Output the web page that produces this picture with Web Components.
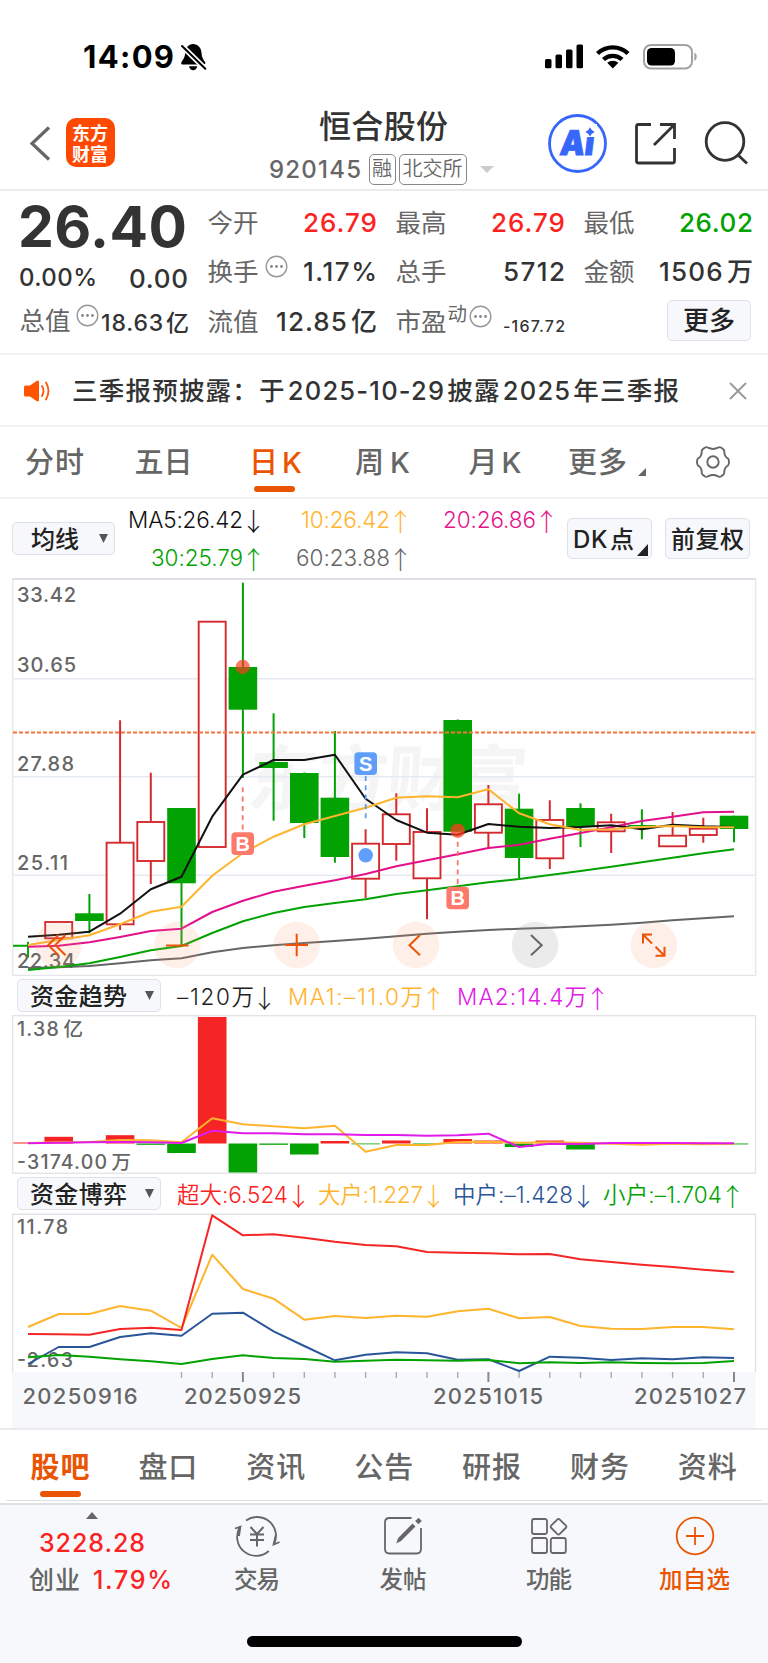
<!DOCTYPE html>
<html lang="zh-CN">
<head>
<meta charset="UTF-8">
<meta name="viewport" content="width=device-width, initial-scale=1.0">
<title>恒合股份 920145</title>
<style>
  body {
    margin: 0;
    width: 768px;
    height: 1663px;
    overflow: hidden;
    background: #fff;
    color: #333;
    font-family: Inter, "Noto Sans CJK SC", sans-serif;
    --orange: #ea5504;
    --red: #fc2222;
    --green: #02a202;
    --gray: #666;
    --line: #ebebee;
    --panel: #f7f8fb;
  }
</style>
</head>
<body>
<status-bar></status-bar>
<stock-header name="恒合股份" code="920145"></stock-header>
<quote-panel></quote-panel>
<notice-bar><fit-text w="607">三季报预披露：于 2025-10-29 披露 2025 年三季报</fit-text></notice-bar>
<period-tabs></period-tabs>
<ma-legend></ma-legend>
<kline-chart></kline-chart>
<indicator-row label="资金趋势" gap="18">
  <trend-value w="77" dir="↓" style="color:#222">–120万</trend-value>
  <trend-value w="135" dir="↑" style="color:#ffb42e">MA1:–11.0万</trend-value>
  <trend-value w="130" dir="↑" style="color:#e01ae8">MA2:14.4万</trend-value>
</indicator-row>
<flow-chart></flow-chart>
<indicator-row label="资金博弈" gap="14">
  <trend-value w="111" dir="↓" style="color:#fc2222">超大:6.524</trend-value>
  <trend-value w="105" dir="↓" style="color:#ffb42e">大户:1.227</trend-value>
  <trend-value w="120" dir="↓" style="color:#2a5699">中户:–1.428</trend-value>
  <trend-value w="119" dir="↑" style="color:#02a202">小户:–1.704</trend-value>
</indicator-row>
<game-chart></game-chart>
<info-tabs></info-tabs>
<bottom-nav></bottom-nav>

<script>
const STEP = 30.695;
const X0 = 28;
const px = i => +(X0 + i * STEP).toFixed(1);

// polyline through the 24 trading days; values are in thirds of a pixel below base
function line(values, base, color, width = 2) {
  const pts = values.map((v, i) => px(i) + ',' + (base + v / 3).toFixed(1)).join(' ');
  return `<polyline points="${pts}" fill="none" stroke="${color}" stroke-width="${width}" stroke-linejoin="round"/>`;
}

function label(x, y, w, text, size = 20) {
  return `<text x="${x}" y="${y}" font-size="${size}" font-weight="500" fill="#666" textLength="${w}" style="word-spacing:-3px">${text}</text>`;
}

class TrendValue extends HTMLElement {
  connectedCallback() {
    this.attachShadow({ mode: 'open' });
    const text = this.textContent.trim();
    this.shadowRoot.innerHTML = `
      <style>
        :host { display: flex; align-items: center; font-size: 22.5px; line-height: 32px; font-weight: 350; }
        i { width: 11px; margin-left: 5px; display: flex; justify-content: center; font: 300 25px/32px "Noto Sans CJK SC"; }
      </style>
      <fit-text w="${this.getAttribute('w')}">${text}</fit-text><i>${this.getAttribute('dir')}</i>
    `;
  }
}
customElements.define('trend-value', TrendValue);

class StatusBar extends HTMLElement {
  connectedCallback() {
    this.attachShadow({ mode: 'open' });
    this.shadowRoot.innerHTML = `
      <style>
        :host { display: flex; align-items: center; height: 100px; box-sizing: border-box; padding: 14px 71px 0 83px; color: #000; }
        .time { font-size: 31px; line-height: 40px; font-weight: 700; }
        .bell { margin-left: 6px; }
        .right { margin-left: auto; }
        svg { display: block; }
      </style>
      <fit-text class="time" w="91">14:09</fit-text>
      <svg class="bell" width="27" height="28" viewBox="180 43 27 28">
        <path d="M193 44c5 0 8 3.600 8.500 8.500.4 5 1.500 6.500 3.500 9.500.8 1.400.3 2.500-1.300 2.500H183c-1.800 0-2.300-1.200-1.400-2.600 2-3 3.300-4.600 3.600-9.400C185.700 47.600 188.500 44 193 44zM189 66.300h8.300c-.6 2.500-2.200 3.900-4.100 3.900s-3.600-1.400-4.200-3.900z"/>
        <path d="M180.500 44.500l25.500 25" stroke="#fff" stroke-width="5.500"/>
        <path d="M182 46l23.300 22.800" stroke="#000" stroke-width="2" stroke-linecap="round"/>
      </svg>
      <svg class="right" width="154" height="28" viewBox="543 43 154 28">
        <rect x="545" y="59" width="6.500" height="9.300" rx="1.500"/>
        <rect x="555.500" y="54.500" width="6.500" height="13.800" rx="1.500"/>
        <rect x="566" y="49.500" width="6.500" height="18.800" rx="1.500"/>
        <rect x="576.500" y="44.500" width="6.500" height="23.800" rx="1.500"/>
        <path d="M597.500 53.500a22 22 0 0 1 30.500 0M603.500 59.500a13.500 13.500 0 0 1 18.500 0" fill="none" stroke="#000" stroke-width="4.400"/>
        <path d="M612.800 68.500l-5.600-5.700a8.300 8.300 0 0 1 11.200 0z"/>
        <rect x="644" y="45" width="48" height="23.500" rx="7" fill="none" stroke="#a2a2a2" stroke-width="2"/>
        <rect x="647" y="48" width="28" height="17.500" rx="4.500"/>
        <path d="M694.300 52.500c3.200 1.300 3.200 7 0 8.300z" fill="#a2a2a2"/>
      </svg>
    `;
  }
}
customElements.define('status-bar', StatusBar);

class StockHeader extends HTMLElement {
  connectedCallback() {
    this.attachShadow({ mode: 'open' });
    this.shadowRoot.innerHTML = `
      <style>
        :host { display: grid; grid-template-columns: 269px 1fr 221px; height: 91px; box-sizing: border-box; border-bottom: 2px solid var(--line); }
        svg { display: block; }
        .left { display: flex; align-items: flex-start; padding: 18px 0 0 28px; }
        .left svg { margin: 6px 11.500px 0 0; }
        .logo { width: 49px; height: 49px; box-sizing: border-box; border-radius: 10px; background: #ff4800; color: #fff; font: 700 18px/21px "Noto Sans CJK SC"; text-align: center; padding-top: 4px; }
        .name { font-size: 32px; line-height: 40px; font-weight: 500; padding: 7px 0 0 50px; height: 40px; }
        .sub { display: flex; align-items: center; height: 31px; margin-top: 7px; color: var(--gray); }
        .code { font-size: 24px; line-height: 31px; font-weight: 500; }
        .tag { box-sizing: border-box; height: 31px; border: 1.5px solid #888; border-radius: 5px; font-size: 20px; line-height: 29px; margin-left: 3px; text-align: center; font-weight: 350; }
        .first { margin-left: 7.500px; }
        .arrow { border: 7px solid transparent; border-top-color: #ccc; border-bottom: 0; margin-left: 13px; }
        .right { display: flex; padding-top: 13px; }
      </style>
      <div class="left">
        <svg width="26" height="38" viewBox="28 124 26 38"><path d="M49 127.500L32 143.500l17 16" fill="none" stroke="#666" stroke-width="3.200"/></svg>
        <div class="logo">东方<br>财富</div>
      </div>
      <div class="mid">
        <div class="name"><fit-text w="129">${this.getAttribute('name')}</fit-text></div>
        <div class="sub">
          <fit-text class="code" w="92">${this.getAttribute('code')}</fit-text>
          <span class="tag first" style="width:27px">融</span>
          <span class="tag" style="width:68px">北交所</span>
          <span class="arrow"></span>
        </div>
      </div>
      <div class="right">
        <svg width="204" height="62" viewBox="547 113 204 62">
          <circle cx="577.500" cy="143.500" r="28" fill="#fff" stroke="#3766fa" stroke-width="2.800"/>
          <g transform="translate(559 154.500) skewX(-7)">
            <text font-family="Inter" font-size="34" font-weight="900" fill="#3766fa" stroke="#3766fa" textLength="34" lengthAdjust="spacingAndGlyphs">Ai</text>
          </g>
          <rect x="584" y="124" width="13" height="13" fill="#fff"/>
          <path d="M590 127.200q1.300 3.400 4.700 4.700-3.400 1.300-4.700 4.700-1.300-3.400-4.700-4.700 3.400-1.300 4.700-4.700z" fill="#3766fa"/>
          <g fill="none" stroke="#333" stroke-width="2.800">
            <path d="M651 124.500h-12.500q-2 0-2 2V161q0 2 2 2h34q2 0 2-2v-13M660 124.500h14.500V139M674.500 124.500L654 145"/>
            <circle cx="725" cy="141.500" r="18.800"/>
            <path d="M737.500 154.500l9.500 9"/>
          </g>
        </svg>
      </div>
    `;
  }
}
customElements.define('stock-header', StockHeader);

const dots = `<svg width="23" height="23" viewBox="-11.500 -11.500 23 23"><circle r="10.300" fill="none" stroke="#999" stroke-width="1.400"/><g fill="#888"><circle cx="-5" r="1.400"/><circle r="1.400"/><circle cx="5" r="1.400"/></g></svg>`;

class QuotePanel extends HTMLElement {
  connectedCallback() {
    this.attachShadow({ mode: 'open' });
    const cell = (name, w, value, cls = '', extra = '') => `
      <div class="cell"><span class="k">${name}</span>${extra}<span class="v ${cls}"><fit-text w="${w}">${value}</fit-text></span></div>`;
    this.shadowRoot.innerHTML = `
      <style>
        :host { display: grid; grid-template-columns: repeat(4, 168px); column-gap: 20px; padding: 7px 15px 0 20px; height: 164px; box-sizing: border-box; border-bottom: 2px solid #f2f2f4; word-spacing: -5px; }
        .col { display: flex; flex-direction: column; }
        .cell { display: flex; align-items: center; height: 49.300px; font-size: 26px; line-height: 49px; }
        .k { color: var(--gray); font-size: 25.500px; white-space: nowrap; margin-left: -0.500px; }
        .v { margin: 0 -1px 0 auto; font-weight: 500; white-space: nowrap; }
        .up { color: var(--red); }
        .down { color: var(--green); }
        svg { display: block; margin: -10px 0 0 6px; }
        .price { font-size: 57px; line-height: 57px; font-weight: 700; height: 57px; margin-left: -2px; }
        .change { display: flex; justify-content: space-between; font-size: 25px; height: 43px; line-height: 31px; font-weight: 500; margin: 7px 0 0 -1px; }
        .small { font-size: 23px; padding-top: 5px; }
        .tiny { font-size: 16px; padding-top: 11px; }
        sup { font-size: 19.500px; line-height: 20px; color: var(--gray); margin: -15px 0 0 1px; }
        sup + svg { margin-left: 2px; }
        button { margin: -2px 1px 0 auto; width: 84px; height: 41px; border: 1.500px solid #dfe1e6; border-radius: 5px; background: var(--panel); color: #222; font: 500 26px/37px Inter, "Noto Sans CJK SC"; padding: 0; }
      </style>
      <div class="col">
        <fit-text class="price" w="169">26.40</fit-text>
        <div class="change"><fit-text w="78" style="font-size:24px">0.00%</fit-text><fit-text w="59" style="font-size:26px;padding-top:1px">0.00</fit-text></div>
        <div class="cell" style="margin-top:-9px"><span class="k">总值</span><span style="margin-left:-1px">${dots}</span><span class="v small"><fit-text w="88">18.63 亿</fit-text></span></div>
      </div>
      <div class="col">
        ${cell('今开', 74, '26.79', 'up')}
        ${cell('换手', 74, '1.17%', '', `<span>${dots}</span>`)}
        ${cell('流值', 101, '12.85 亿')}
      </div>
      <div class="col">
        ${cell('最高', 74, '26.79', 'up')}
        ${cell('总手', 62, '5712')}
        ${cell('市盈', 62, '-167.72', 'tiny', `<sup>动</sup>${dots}`)}
      </div>
      <div class="col">
        ${cell('最低', 74, '26.02', 'down')}
        ${cell('金额', 94, '1506 万')}
        <div class="cell"><button>更多</button></div>
      </div>
    `;
  }
}
customElements.define('quote-panel', QuotePanel);

class NoticeBar extends HTMLElement {
  connectedCallback() {
    this.attachShadow({ mode: 'open' });
    this.shadowRoot.innerHTML = `
      <style>
        :host { display: flex; align-items: center; height: 72px; box-sizing: border-box; padding: 1px 21px 0 23px; border-bottom: 2px solid #f2f2f4; font-size: 25.500px; line-height: 40px; font-weight: 500; word-spacing: -6px; }
        .text { margin-left: 21px; white-space: nowrap; }
        .close { margin-left: auto; }
        svg { flex: none; }
      </style>
      <svg width="28" height="24" viewBox="22 378 28 24">
        <path d="M24.500 384.500h4.500l6.500-4.500q2.500-1.300 2.500 1.200v17.600q0 2.500-2.500 1.200L29 395.500h-4.500q-1.500 0-1.500-1.500v-8q0-1.500 1.500-1.500z" fill="#ff5500"/>
        <path d="M41 385q3 5 0 10M45 381.500q5 8.500 0 17" fill="none" stroke="#ff5500" stroke-width="1.800" stroke-linecap="round"/>
      </svg>
      <div class="text"><slot></slot></div>
      <svg class="close" width="18" height="18" viewBox="0 0 18 18"><path d="M1 1l16 16M17 1L1 17" stroke="#999" stroke-width="1.900"/></svg>
    `;
  }
}
customElements.define('notice-bar', NoticeBar);

class PeriodTabs extends HTMLElement {
  connectedCallback() {
    this.attachShadow({ mode: 'open' });
    this.shadowRoot.innerHTML = `
      <style>
        :host { display: grid; grid-template-columns: 109px 109px 115px 99px 126px 99px 111px; height: 72px; box-sizing: border-box; border-bottom: 2px solid #f2f2f4; color: var(--gray); font-size: 29px; font-weight: 500; line-height: 71px; word-spacing: -4px; }
        div { display: flex; justify-content: center; position: relative; height: 70px; }
        .active { color: var(--orange); }
        .active::after { content: ""; position: absolute; width: 41px; height: 6px; border-radius: 3px; background: var(--orange); bottom: 5px; left: 36px; }
        .more { justify-content: flex-start; padding-left: 10px; }
        .more svg { margin: 41px 0 0 11px; }
        .gear { align-items: center; }
      </style>
      <div><fit-text w="59">分时</fit-text></div>
      <div><fit-text w="58">五日</fit-text></div>
      <div class="active"><fit-text w="53">日 K</fit-text></div>
      <div><fit-text w="55">周 K</fit-text></div>
      <div><fit-text w="53">月 K</fit-text></div>
      <div class="more"><fit-text w="59">更多</fit-text><svg width="8" height="8"><path d="M8 0v8H0z" fill="#666"/></svg></div>
      <div class="gear">
        <svg width="36" height="34" viewBox="-18 -17 36 34" fill="none" stroke="#666" stroke-width="1.900" stroke-linejoin="round">
          <path d="M-8 -14.500Q-6.500 -15.300 -5 -14.300Q0 -11.800 5 -14.300Q6.500 -15.300 8 -14.500L10.500 -12.500Q11.500 -11.500 11.300 -10Q11.300 -5.500 15 -3.500Q16 -2.500 16 0Q16 2.500 15 3.500Q11.300 5.500 11.300 10Q11.500 11.500 10.500 12.500L8 14.500Q6.500 15.300 5 14.300Q0 11.800 -5 14.300Q-6.500 15.300 -8 14.500L-10.500 12.500Q-11.500 11.500 -11.300 10Q-11.300 5.500 -15 3.500Q-16 2.500 -16 0Q-16 -2.500 -15 -3.500Q-11.300 -5.500 -11.300 -10Q-11.500 -11.500 -10.500 -12.500Z"/>
          <circle r="5.700"/>
        </svg>
      </div>
    `;
  }
}
customElements.define('period-tabs', PeriodTabs);

class MaLegend extends HTMLElement {
  connectedCallback() {
    this.attachShadow({ mode: 'open' });
    this.shadowRoot.innerHTML = `
      <style>
        :host { display: flex; height: 79px; align-items: flex-start; padding-left: 12px; }
        .btn { box-sizing: border-box; display: flex; border: 1.500px solid #dfe1e8; border-radius: 5px; background: var(--panel); color: #222; font-size: 24px; font-weight: 500; flex: none; word-spacing: -5px; }
        .avg { width: 103px; height: 33px; line-height: 33px; margin-top: 23px; padding-left: 18px; }
        .avg svg { margin: 11px 0 0 20px; }
        .grid { display: grid; grid-template-columns: 144px 147px 146px; grid-template-rows: 38px 38px; align-items: center; justify-items: end; padding-top: 2px; }
        .tall { width: 85px; height: 41px; line-height: 42px; margin-top: 19px; padding-left: 5px; }
        .tall svg { margin: 25px 0 0 3px; }
      </style>
      <div class="btn avg"><fit-text w="48">均线</fit-text><svg width="9" height="9"><path d="M0 0h9L4.500 9z" fill="#555"/></svg></div>
      <div class="grid">
        <trend-value w="115" dir="↓" style="color:#111">MA5:26.42</trend-value>
        <trend-value w="89" dir="↑" style="color:#ffb42e">10:26.42</trend-value>
        <trend-value w="93" dir="↑" style="color:#e5158c">20:26.86</trend-value>
        <trend-value w="92" dir="↑" style="color:#02a202">30:25.79</trend-value>
        <trend-value w="94" dir="↑" style="color:#666">60:23.88</trend-value>
      </div>
      <div class="btn tall" style="margin-left:15px"><fit-text w="61">DK 点</fit-text><svg width="11" height="12"><path d="M11 0v12H0z" fill="#222"/></svg></div>
      <div class="btn tall" style="margin-left:13px"><fit-text w="73">前复权</fit-text></div>
    `;
  }
}
customElements.define('ma-legend', MaLegend);

// [colour, body top, body bottom, high, low]
const CANDLES = [
  null,
  ['r', 922, 938.3, 922, 938.3],
  ['g', 913.3, 921, 894, 933.3],
  ['r', 842.7, 924.3, 720.3, 930],
  ['r', 822, 861, 772.7, 884],
  ['g', 808, 883.3, 808, 945.7],
  ['r', 621.7, 847, 621.7, 847],
  ['g', 667, 709.7, 582.7, 778],
  ['g', 762, 768, 713.3, 820.7],
  ['g', 773, 823, 772.5, 838],
  ['g', 797.7, 857, 731, 862.7],
  ['r', 843.7, 878.7, 829.3, 898],
  ['r', 814.3, 844, 793.3, 860.7],
  ['r', 832, 878.3, 808.3, 919.3],
  ['g', 720, 831.7, 719.5, 831.7],
  ['r', 804.3, 832.7, 785, 848.3],
  ['g', 808.7, 858, 793.7, 878],
  ['r', 820, 858.3, 800.3, 869],
  ['g', 808, 827, 803.3, 847],
  ['r', 822.3, 831.3, 813.7, 853],
  ['g', 825, 826.3, 809.3, 839.3],
  ['r', 835.7, 846.3, 812, 846.3],
  ['r', 828.7, 835, 817.7, 842.7],
  ['g', 815.7, 829, 815.7, 842.3]
];

class KlineChart extends HTMLElement {
  candles() {
    return CANDLES.map((c, i) => {
      if (!c) return '<path d="M13 945.700H28M28 941.700V957.700" stroke="#02a202" stroke-width="1.900"/>';
      const [kind, top, bottom, high, low] = c;
      const x = px(i);
      if (kind === 'g') {
        return `<path d="M${x} ${high}V${low}" stroke="#02a202" stroke-width="2"/><rect x="${x - 14.3}" y="${top}" width="28.600" height="${bottom - top}" fill="#02a202"/>`;
      }
      return `<path d="M${x} ${high}V${top}M${x} ${bottom}V${low}" stroke="#d42a2e" stroke-width="2"/><rect x="${x - 13.5}" y="${top}" width="27" height="${bottom - top}" fill="#fff" stroke="#d42a2e" stroke-width="1.900"/>`;
    }).join('');
  }
  badge(x, y, letter, color) {
    return `<rect x="${x - 11.3}" y="${y}" width="22.600" height="22.600" rx="4" fill="${color}"/>
      <text x="${x}" y="${y + 18.3}" text-anchor="middle" font-size="20" font-weight="700" font-family="Liberation Sans" fill="#fff">${letter}</text>`;
  }
  connectedCallback() {
    this.attachShadow({ mode: 'open' });
    const centers = [58.3, 177.3, 296.7, 416, 535, 654];
    this.shadowRoot.innerHTML = `
      <style>
        :host { display: block; height: 398px; }
        svg { display: block; }
      </style>
      <svg width="768" height="398" viewBox="0 578 768 398">
        <g transform="translate(246 805) skewX(-4)">
          <text font-family="Noto Sans CJK SC" font-size="72" font-weight="700" fill="#f5f5f6" textLength="280">东方财富</text>
        </g>
        <path d="M12.800 579V975.300H755.700V579" fill="none" stroke="#e6e6ea" stroke-width="1.300"/>
        <path d="M12 579H756" stroke="#dde1e6" stroke-width="1.800"/>
        <path d="M12 678.700H756M12 776.700H756M12 875.300H756" stroke="#e6ebf1" stroke-width="1.600"/>
        ${this.candles()}
        <path d="M13 732.500H755" stroke="#f5753a" stroke-width="1.800" stroke-dasharray="4 2"/>
        ${label(17, 602, 59, '33.42')}
        ${label(17, 671.7, 59, '30.65')}
        ${label(17, 770.7, 57, '27.88')}
        ${label(17, 869.5, 51, '25.11')}
        ${label(17, 967.7, 58, '22.34')}
        ${line([1194,1192,1188,1180,1171,1165,1147,1134,1126,1119,1113,1106,1099,1091,1085,1080,1076,1073,1069,1064,1058,1051,1045,1039], 570, '#666')}
        ${line([1200,1191,1180,1161,1141,1128,1089,1054,1029,1011,999,988,972,961,949,937,927,915,903,890,877,863,850,838], 570, '#02a202')}
        ${line([1130,1127,1117,1101,1083,1076,1026,992,965,947,931,912,889,871,853,834,824,806,789,772,753,740,727,725], 570, '#e3108a')}
        ${line([1100,1094,1085,1031,958,920,740,614,570,570,554,686,750,788,794,762,770,774,771,766,778,764,769,771], 570, '#111')}
        ${line([1125,1110,1096,1063,1025,1010,917,849,800,763,738,713,683,679,682,658,730,763,780,778,771,768,772,772], 570, '#ffb42e')}
        <g stroke-width="1.800" stroke-dasharray="5 4.300">
          <path d="M242.700 787.300V831M457.700 841.700V885" stroke="#fb7466"/>
          <path d="M365.700 776V820" stroke="#5a9df8"/>
        </g>
        ${this.badge(242.7, 832.3, 'B', '#fd7a6b')}
        ${this.badge(365.7, 752.3, 'S', '#5f9ffb')}
        ${this.badge(457.7, 886.7, 'B', '#fd7a6b')}
        <circle cx="242.700" cy="667" r="7.200" fill="#ff3b1f" fill-opacity=".68"/>
        <circle cx="457.700" cy="830.700" r="7.200" fill="#ff3b1f" fill-opacity=".75"/>
        <circle cx="365.700" cy="855.300" r="7.200" fill="#5f9ffb"/>
        ${centers.map((x, i) => `<circle cx="${x}" cy="945" r="23.300" fill="${i === 4 ? '#999' : '#fb9a6a'}" fill-opacity="${i === 4 ? .2 : .15}"/>`).join('')}
        <g fill="none" stroke="#ee5307" stroke-width="2">
          <path d="M58.500 935L48.300 945l10.200 10.300M65.500 935L55.300 945l10.200 10.300M166 945.500h22.500M285.500 945h22.500M296.700 933.700v22.600M420 935l-10.500 10.300 10.500 10"/>
          <path d="M652 934.500h-9v9M643 934.500l9 9M655.500 955.700h9v-9M664.500 955.700l-9-9"/>
          <path d="M531 935l10.700 10.300-10.700 10" stroke="#666"/>
        </g>
      </svg>
    `;
  }
}
customElements.define('kline-chart', KlineChart);

class IndicatorRow extends HTMLElement {
  connectedCallback() {
    this.attachShadow({ mode: 'open' });
    this.shadowRoot.innerHTML = `
      <style>
        :host { display: flex; align-items: center; height: 39px; padding-left: 17px; }
        .btn { box-sizing: border-box; display: flex; align-items: center; justify-content: space-between; width: 144px; height: 33px; padding: 0 6px 0 12px; border: 1.500px solid #dfe1e8; border-radius: 5px; background: var(--panel); color: #222; font-size: 24px; line-height: 32px; font-weight: 500; }
        .btn fit-text { padding-top: 2px; }
        .items { display: flex; gap: ${this.getAttribute('gap')}px; margin: 2px 0 0 16px; }
      </style>
      <div class="btn"><fit-text w="97">${this.getAttribute('label')}</fit-text><svg width="9" height="9"><path d="M0 0h9L4.500 9z" fill="#555"/></svg></div>
      <div class="items"><slot></slot></div>
    `;
  }
}
customElements.define('indicator-row', IndicatorRow);

class FlowChart extends HTMLElement {
  connectedCallback() {
    this.attachShadow({ mode: 'open' });
    const zero = 1143.5;
    const bars = [-1, -6.7, 0, -8.3, 1.3, 9.5, -126.5, 29, 1.3, 11, -2.5, .8, -3, .8, -4.5, -3, 3.5, -3, 6, 0, 0, 0, -.8, .9];
    const rects = bars.map((v, i) => {
      const x = i ? px(i) - 14.3 : 13.5;
      return `<rect x="${x}" y="${v < 0 ? zero + v : zero}" width="28.600" height="${Math.abs(v)}" fill="${v < 0 ? '#f62525' : '#02a202'}"/>`;
    }).join('');
    this.shadowRoot.innerHTML = `
      <style>
        :host { display: block; height: 159px; }
        svg { display: block; }
      </style>
      <svg width="768" height="159" viewBox="0 1015 768 159">
        <rect x="12.700" y="1015.700" width="742.800" height="157.600" fill="#fff" stroke="#e3e3e6" stroke-width="1.300"/>
        ${label(17, 1035.7, 66, '1.38 亿', 19.5)}
        ${label(17, 1169, 114, '-3174.00 万', 19.5)}
        ${rects}
        ${line([519,517,516,510,511,517,445,463,469,475,467,545,525,525,516,515,518,517,518,521,524,521,523,521], 970, '#ffb42e')}
        ${line([520,518,517,516,517,519,482,490,490,493,493,495,495,497,496,491,531,521,522,519,519,519,520,520], 970, '#e01ae8')}
      </svg>
    `;
  }
}
customElements.define('flow-chart', FlowChart);

class GameChart extends HTMLElement {
  connectedCallback() {
    this.attachShadow({ mode: 'open' });
    let ticks = '';
    for (let i = 5; i < 24; i++) {
      const long = i === 7 || i === 15 || i === 23;
      ticks += `<path d="M${px(i)} 1372V${long ? 1382 : 1378}" stroke="${long ? '#888' : '#aaa'}" stroke-width="${long ? 2 : 1.4}"/>`;
    }
    this.shadowRoot.innerHTML = `
      <style>
        :host { display: block; height: 215px; border-bottom: 2px solid var(--line); }
        svg { display: block; }
      </style>
      <svg width="768" height="215" viewBox="0 1213 768 215">
        <rect x="12" y="1372" width="743.500" height="56" fill="#f7f8fb"/>
        <path d="M12.700 1372V1214.300H755.500V1372" fill="none" stroke="#e3e3e6" stroke-width="1.400"/>
        ${label(17, 1234, 51, '11.78', 19.5)}
        ${label(17, 1366.7, 56, '-2.63', 19.5)}
        ${line([381,342,342,318,332,384,164,267,296,359,348,354,347,350,334,326,355,351,378,386,387,381,381,388], 1200, '#ffb42e')}
        ${line([402,403,404,387,383,390,46,106,103,113,125,135,139,156,158,160,163,162,178,186,194,201,209,216], 1200, '#f62525')}
        ${line([492,441,441,411,400,407,341,338,394,438,481,464,457,460,479,478,513,470,473,480,475,478,472,474], 1200, '#2a5699')}
        ${line([472,465,470,478,484,492,477,466,474,477,485,482,479,481,482,480,490,487,489,487,489,490,489,483], 1200, '#02a202')}
        ${ticks}
        ${label(22.5, 1404, 115, '20250916', 22)}
        ${label(184, 1404, 117, '20250925', 22)}
        ${label(433, 1404, 110, '20251015', 22)}
        ${label(634, 1404, 112, '20251027', 22)}
      </svg>
    `;
  }
}
customElements.define('game-chart', GameChart);

class InfoTabs extends HTMLElement {
  connectedCallback() {
    this.attachShadow({ mode: 'open' });
    const tabs = ['股吧', '盘口', '资讯', '公告', '研报', '财务', '资料'];
    this.shadowRoot.innerHTML = `
      <style>
        :host { display: grid; grid-template-columns: repeat(7, 107.900px); margin: 0 6px; height: 71px; box-sizing: border-box; border-bottom: 1.500px solid #e0e0e2; color: var(--gray); font-size: 29px; font-weight: 500; line-height: 75px; }
        div { padding-left: 24.500px; position: relative; height: 70px; }
        .active { color: var(--orange); font-weight: 600; }
        .active::after { content: ""; position: absolute; width: 41px; height: 6px; border-radius: 3px; background: var(--orange); bottom: 3px; left: 34px; }
      </style>
      ${tabs.map((t, i) => `<div class="${i ? '' : 'active'}"><fit-text w="59">${t}</fit-text></div>`).join('')}
    `;
  }
}
customElements.define('info-tabs', InfoTabs);

class BottomNav extends HTMLElement {
  connectedCallback() {
    this.attachShadow({ mode: 'open' });
    this.shadowRoot.innerHTML = `
      <style>
        :host { display: block; height: 159px; margin-top: 2px; border-top: 2px solid #dfe0e2; background: var(--panel); }
        nav { display: grid; grid-template-columns: 184px 146px 146px 146px 145px; height: 131px; color: var(--gray); font-weight: 500; }
        .item { display: flex; flex-direction: column; align-items: center; padding-top: 9px; font-size: 23.500px; line-height: 36px; }
        .item svg { margin-bottom: 4px; }
        .index { padding-top: 7px; }
        .tri { width: 0; border: 6.500px solid transparent; border-bottom: 7px solid #666; border-top: 0; margin-left: 86px; }
        .num { display: block; font-size: 25px; line-height: 34px; margin: 7px 0 0 39px; color: var(--red); width: 110px; }
        .row { display: flex; font-size: 25px; line-height: 36px; padding: 2px 0 0 29px; }
        .row .pct { margin-left: 13px; color: var(--red); }
        .home { width: 275px; height: 10.500px; border-radius: 6px; background: #000; margin: 0 auto; }
        .add { color: var(--orange); }
        svg { fill: none; stroke: #666; stroke-width: 1.800; }
      </style>
      <nav>
        <div class="index">
          <div class="tri"></div>
          <fit-text class="num" w="106">3228.28</fit-text>
          <div class="row"><fit-text w="51">创业</fit-text><span class="pct"><fit-text w="79">1.79%</fit-text></span></div>
        </div>
        <div class="item">
          <svg width="48" height="44" viewBox="-24 -22 48 44">
            <path d="M-11 -15.500A19 19 0 0 1 17 8.500L22.500 6M16.500 8.800L18.800 -1M11.800 15A19 19 0 0 1 -17 -9.200L-22 -7.500M-16.500 -9.800L-18 0" />
            <path d="M-6.500 -9L0 -2l6.500 -7M0 -2V10.500M-7 -1.500H7M-7 4H7" stroke-width="2"/>
          </svg>
          <fit-text w="46">交易</fit-text>
        </div>
        <div class="item">
          <svg width="48" height="44" viewBox="-24 -22 48 44">
            <path d="M8.500 -18H-13.500Q-18 -18 -18 -13.500V13Q-18 17.500 -13.500 17.500H13.500Q18 17.500 18 13V-8"/>
            <path d="M-6.800 7.500l2-5.500L9.500 -12.500l3 3L-2 5z" fill="#666" stroke="none"/>
            <path d="M13.800 -13.300l3.400-3.400" stroke-width="4.500"/>
          </svg>
          <fit-text w="47">发帖</fit-text>
        </div>
        <div class="item">
          <svg width="48" height="44" viewBox="-24 -22 48 44">
            <rect x="-17" y="-17" width="15" height="15" rx="2"/>
            <rect x="-17" y="2" width="15" height="15" rx="2"/>
            <rect x="1.800" y="2" width="15" height="15" rx="2"/>
            <rect x="-6" y="-6" width="12" height="12" rx="1.500" transform="translate(9.500 -9.300) rotate(45)"/>
          </svg>
          <fit-text w="46">功能</fit-text>
        </div>
        <div class="item add">
          <svg width="48" height="44" viewBox="-24 -22 48 44" style="stroke:#ea5504">
            <circle r="18.300"/><path d="M-9 0H9M0 -9V9"/>
          </svg>
          <fit-text w="71">加自选</fit-text>
        </div>
      </nav>
      <div class="home"></div>
    `;
  }
}
customElements.define('bottom-nav', BottomNav);

// Text that spreads its letters to fill the given width.
// Defined last: it measures itself, so its parents must be styled already.
class FitText extends HTMLElement {
  connectedCallback() {
    if (this.shadowRoot) return;
    this.attachShadow({ mode: 'open' });
    this.shadowRoot.innerHTML = '<style>:host { display: inline-block; white-space: pre; }</style><span><slot></slot></span>';
    const span = this.shadowRoot.querySelector('span');
    const count = this.textContent.length;
    const natural = span.getBoundingClientRect().width;
    if (!natural) return;
    const gap = (Number(this.getAttribute('w')) - natural) / Math.max(1, count - 1);
    this.style.letterSpacing = gap.toFixed(3) + 'px';
    this.style.marginRight = (-gap).toFixed(3) + 'px';
  }
}
customElements.define('fit-text', FitText);
</script>
</body>
</html>
